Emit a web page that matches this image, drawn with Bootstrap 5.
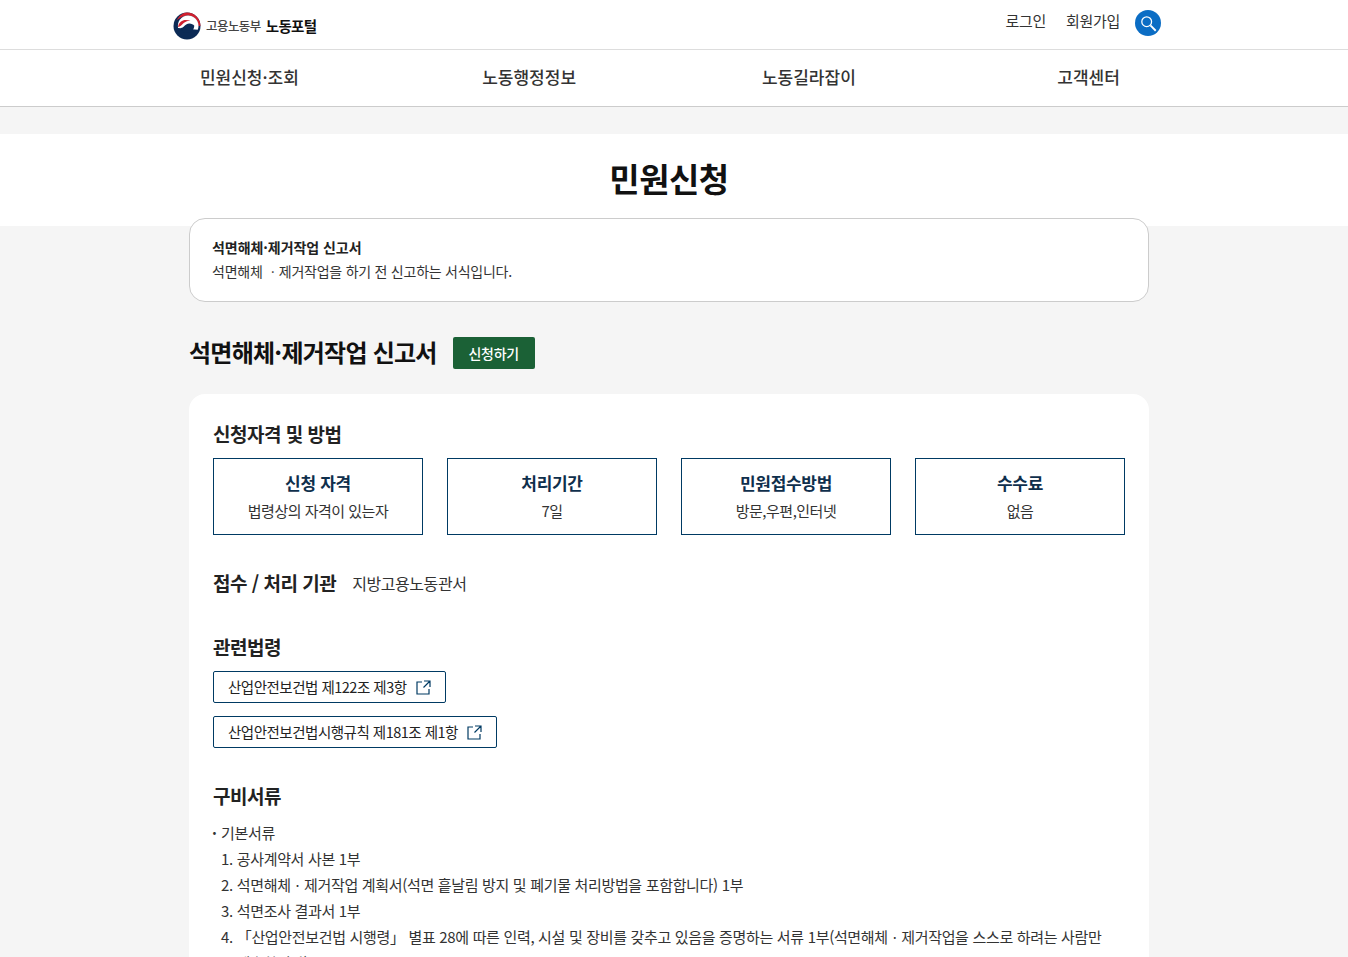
<!DOCTYPE html>
<html lang="ko">
<head>
<meta charset="utf-8">
<title>민원신청</title>
<link href="https://cdn.jsdelivr.net/npm/bootstrap@5.3.0/dist/css/bootstrap.min.css" rel="stylesheet">
<style>
html,body{height:957px;overflow:hidden}
body{font-family:"Noto Sans CJK KR","Noto Sans",sans-serif;background:#f5f5f5;color:#222;font-size:14px;letter-spacing:-.4px}
.page-wrap{padding-right:10px}
.top-band,.nav-band,.title-band{margin-right:-10px;padding-right:10px;background:#fff}
.top-band{height:50px;border-bottom:1px solid #ddd}
.top-inner{width:992px;margin:0 auto;height:49px;padding-right:4px}
.brand-link{margin-top:2px}
.brand-sub{font-size:12.5px;color:#444;font-weight:500;margin-left:5px;letter-spacing:-.55px;margin-top:1px}
.brand-main{font-size:14.5px;font-weight:700;color:#111;margin-left:5px;letter-spacing:-.7px;margin-top:1px}
.top-link{font-size:15px;color:#333;text-decoration:none;letter-spacing:-.3px;margin-top:-6px}
.search-round{width:26px;height:26px;border-radius:50%;background:#0b6dc4;border:0;padding:0;margin-top:-3px;margin-left:-1px}
.nav-band{height:57px;border-bottom:1px solid #ccc}
.nav-inner{width:1119px;margin:0 auto}
.nav-cell{height:56px;line-height:54px;font-size:17px;font-weight:500;color:#333;text-decoration:none;letter-spacing:0}
.gap-band{height:27px}
.title-band{height:92px}
.page-title{font-size:33px;font-weight:700;color:#111;line-height:89px;margin:0;letter-spacing:-.5px}
.main-col{width:960px;margin:-8px auto 0;position:relative}
.intro-box{height:84px;background:#fff;border:1px solid #ccc;border-radius:16px;padding:16px 22px}
.intro-title{font-size:14px;font-weight:700;line-height:24px;letter-spacing:-.05px}
.intro-text{font-size:14px;line-height:24px;color:#333;letter-spacing:-.25px}
.form-head{margin-top:35px;height:32px}
.form-title{font-size:24px;font-weight:700;color:#111;margin:0 16px 2px 0;letter-spacing:-.75px;line-height:30px}
.apply-btn{background:#1b6136;color:#fff;font-size:14px;font-weight:500;border-radius:2px;width:82px;height:32px;padding:0;line-height:32px;border:0;letter-spacing:-.25px}
.panel{background:#fff;border-radius:16px;margin-top:25px;padding:24px;min-height:700px}
.sec-title{font-size:19px;font-weight:700;color:#222;line-height:32px;margin:0;letter-spacing:-.5px}
.info-row{margin-top:8px;gap:24px}
.info-box{width:210px;height:77px;border:1px solid #003a63;text-align:center;padding-top:10px}
.info-head{font-size:17px;font-weight:700;line-height:28px;color:#0f2f4c;letter-spacing:-.3px}
.info-val{font-size:15px;line-height:28px;color:#333;letter-spacing:-.5px}
.org-row{margin-top:32px}
.org-val{font-size:16px;color:#333;margin-left:16px;letter-spacing:-.45px}
.law-title{margin-top:32px}
.law-btn{display:inline-flex;align-items:center;height:32px;background:#fff;border:1px solid #003a63;border-radius:2px;padding:0 14px;font-size:14.5px;color:#222;text-decoration:none;letter-spacing:-.5px}
.law-btn svg{margin-left:9px;flex:none}
.law-list{margin-top:8px;gap:13px}
.docs-title{margin-top:32px}
.doc-lines{margin-top:8px;font-size:15px;line-height:26px;color:#333;letter-spacing:-.33px}
.doc-item{padding-left:8px;white-space:nowrap}
.doc-dot{display:inline-block;width:9px;margin-left:-1px;text-align:left;font-weight:700}
</style>
</head>
<body>
<div class="page-wrap">
  <header class="top-band">
    <div class="top-inner d-flex align-items-center justify-content-between">
      <a href="#" class="brand-link d-flex align-items-center text-decoration-none">
        <svg width="28" height="28" viewBox="0 0 28 28" aria-hidden="true"><circle cx="14" cy="14" r="13.500" fill="#0b2a55"/><path d="M3.500 8.500C6 3.500 10 .5 14 .5c7.500 0 13.500 6 13.500 13.500h-2C25 8 20.500 3.500 15 3.500c-4 0-8.500 2.500-11.500 5z" fill="#d0202e"/><path d="M15 3.500C20.500 3.500 25.500 8 25.500 14c0 1-.2 2.500-.8 3.800L5 16c-.5-4 .5-6.500 2-8.500C9 5 12 3.500 15 3.500z" fill="#fff"/><path d="M5 15c.5-3 2-5.500 5-6.500 2.500-.8 5-.5 7.500.5-2.500-.3-5 .3-6.800 2C9 12.500 7.500 14.500 5 15z" fill="#d0202e"/><path d="M7.500 16c2.500 0 3.800-2.300 5.700-3.600 2.800-1.800 6.400-1 8.100 1.400-.3 4.400-3.500 7.200-7 7.200-3 0-5.500-2-6.800-5z" fill="#0b2a55"/></svg>
        <span class="brand-sub">고용노동부</span><span class="brand-main">노동포털</span>
      </a>
      <div class="d-flex align-items-center gap-3">
        <a class="top-link me-1" href="#">로그인</a>
        <a class="top-link" href="#">회원가입</a>
        <button class="search-round d-flex align-items-center justify-content-center" type="button" aria-label="검색">
          <svg width="17" height="17" viewBox="0 0 16 16" fill="none" stroke="#fff" aria-hidden="true"><circle cx="6.300" cy="6.300" r="4.600" stroke-width="1.200"/><path d="M9.800 9.800l5 5" stroke-width="1.800"/></svg>
        </button>
      </div>
    </div>
  </header>
  <nav class="nav-band">
    <div class="nav-inner row g-0 text-center">
      <a class="col-3 nav-cell" href="#">민원신청·조회</a>
      <a class="col-3 nav-cell" href="#">노동행정정보</a>
      <a class="col-3 nav-cell" href="#">노동길라잡이</a>
      <a class="col-3 nav-cell" href="#">고객센터</a>
    </div>
  </nav>
  <div class="gap-band"></div>
  <div class="title-band text-center"><h1 class="page-title">민원신청</h1></div>
  <main class="main-col">
    <div class="intro-box">
      <div class="intro-title">석면해체·제거작업 신고서</div>
      <div class="intro-text">석면해체 ㆍ제거작업을 하기 전 신고하는 서식입니다.</div>
    </div>
    <div class="form-head d-flex align-items-center">
      <h2 class="form-title">석면해체·제거작업 신고서</h2>
      <a href="#" class="btn apply-btn">신청하기</a>
    </div>
    <section class="panel">
      <h3 class="sec-title">신청자격 및 방법</h3>
      <div class="d-flex info-row">
        <div class="info-box"><div class="info-head">신청 자격</div><div class="info-val">법령상의 자격이 있는자</div></div>
        <div class="info-box"><div class="info-head">처리기간</div><div class="info-val">7일</div></div>
        <div class="info-box"><div class="info-head">민원접수방법</div><div class="info-val">방문,우편,인터넷</div></div>
        <div class="info-box"><div class="info-head">수수료</div><div class="info-val">없음</div></div>
      </div>
      <div class="d-flex align-items-center org-row">
        <h3 class="sec-title">접수 / 처리 기관</h3><span class="org-val">지방고용노동관서</span>
      </div>
      <h3 class="sec-title law-title">관련법령</h3>
      <div class="d-flex flex-column align-items-start law-list">
        <a class="law-btn" href="#">산업안전보건법 제122조 제3항<svg width="15" height="15" viewBox="0 0 15 15" fill="none" stroke="#003a63" stroke-width="1.200" aria-hidden="true"><path d="M6 2H1v12h12V9M8 1h6v6M14 1L7.500 7.500"/></svg></a>
        <a class="law-btn" href="#">산업안전보건법시행규칙 제181조 제1항<svg width="15" height="15" viewBox="0 0 15 15" fill="none" stroke="#003a63" stroke-width="1.200" aria-hidden="true"><path d="M6 2H1v12h12V9M8 1h6v6M14 1L7.500 7.500"/></svg></a>
      </div>
      <h3 class="sec-title docs-title">구비서류</h3>
      <div class="doc-lines">
        <div><span class="doc-dot">·</span>기본서류</div>
        <div class="doc-item">1. 공사계약서 사본 1부</div>
        <div class="doc-item">2. 석면해체ㆍ제거작업 계획서(석면 흩날림 방지 및 폐기물 처리방법을 포함합니다) 1부</div>
        <div class="doc-item">3. 석면조사 결과서 1부</div>
        <div class="doc-item">4. 「산업안전보건법 시행령」 별표 28에 따른 인력, 시설 및 장비를 갖추고 있음을 증명하는 서류 1부(석면해체ㆍ제거작업을 스스로 하려는 사람만</div>
        <div class="doc-item">&nbsp;&nbsp;&nbsp;&nbsp;제출합니다)</div>
      </div>
    </section>
  </main>
</div>
</body>
</html>
